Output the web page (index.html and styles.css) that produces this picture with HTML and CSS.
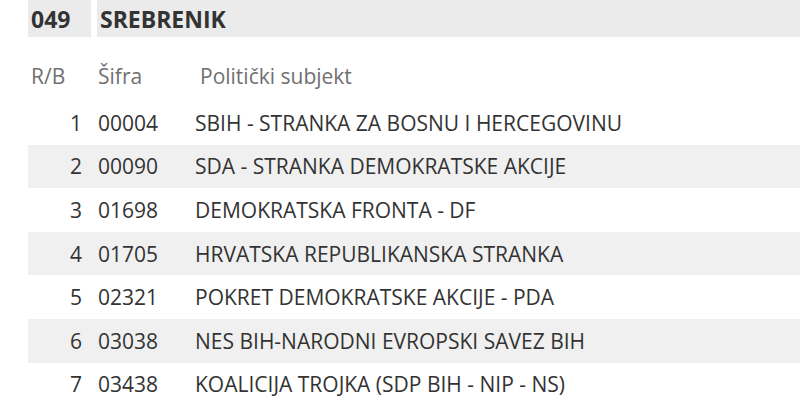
FILE: index.html
```html
<!DOCTYPE html>
<html>
<head>
<meta charset="utf-8">
<link rel="stylesheet" href="styles.css">
</head>
<body>
<div class="page">
  <div class="title">
    <div class="code-box">049</div>
    <div class="name-box">SREBRENIK</div>
  </div>
  <div class="table">
    <div class="row head">
      <div class="rb">R/B</div>
      <div class="sifra">Šifra</div>
      <div class="subj">Politički subjekt</div>
    </div>
    <div class="row"><div class="rb num">1</div><div class="sifra">00004</div><div class="subj">SBIH - STRANKA ZA BOSNU I HERCEGOVINU</div></div>
    <div class="row alt"><div class="rb num">2</div><div class="sifra">00090</div><div class="subj">SDA - STRANKA DEMOKRATSKE AKCIJE</div></div>
    <div class="row"><div class="rb num">3</div><div class="sifra">01698</div><div class="subj">DEMOKRATSKA FRONTA - DF</div></div>
    <div class="row alt"><div class="rb num">4</div><div class="sifra">01705</div><div class="subj">HRVATSKA REPUBLIKANSKA STRANKA</div></div>
    <div class="row"><div class="rb num">5</div><div class="sifra">02321</div><div class="subj">POKRET DEMOKRATSKE AKCIJE - PDA</div></div>
    <div class="row alt"><div class="rb num">6</div><div class="sifra">03038</div><div class="subj">NES BIH-NARODNI EVROPSKI SAVEZ BIH</div></div>
    <div class="row"><div class="rb num">7</div><div class="sifra">03438</div><div class="subj">KOALICIJA TROJKA (SDP BIH - NIP - NS)</div></div>
  </div>
</div>
</body>
</html>
```
FILE: styles.css
```css
html, body {
  margin: 0;
  padding: 0;
  background: #ffffff;
}
body {
  font-family: "Open Sans", "Liberation Sans", sans-serif;
  color: #333333;
}
.page {
  padding-left: 28px;
}
.title {
  display: flex;
  gap: 6px;
  height: 37px;
  font-weight: 700;
  font-size: 23px;
  color: #333333;
}
.code-box {
  width: 60px;
  padding-left: 3px;
  background: #ebebeb;
  display: flex;
  align-items: center;
}
.name-box {
  flex: 1;
  padding-left: 3px;
  background: #ebebeb;
  display: flex;
  align-items: center;
}
.table {
  margin-top: 17px;
}
.row {
  display: grid;
  grid-template-columns: 62px 105px 1fr;
  height: 43.6px;
  align-items: center;
  font-size: 21px;
}
.row.head {
  height: 47px;
  color: #707070;
  padding-bottom: 4px;
  box-sizing: border-box;
}
.row.alt {
  background: #f0f0f0;
}
.rb {
  padding-left: 3px;
}
.rb.num {
  text-align: right;
  padding-right: 8px;
  padding-left: 0;
}
.sifra {
  padding-left: 8px;
}
.head .subj {
  padding-left: 5px;
}
```
